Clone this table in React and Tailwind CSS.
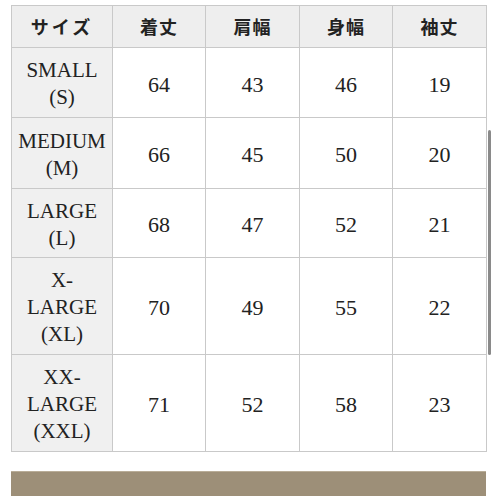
const rows = [
  { size: ["SMALL", "(S)"], h: "h-[70px]", v: [64, 43, 46, 19] },
  { size: ["MEDIUM", "(M)"], h: "h-[71px]", v: [66, 45, 50, 20] },
  { size: ["LARGE", "(L)"], h: "h-[69px]", v: [68, 47, 52, 21] },
  { size: ["X-", "LARGE", "(XL)"], h: "h-[97px]", v: [70, 49, 55, 22] },
  { size: ["XX-", "LARGE", "(XXL)"], h: "h-[97px]", v: [71, 52, 58, 23] },
];

const heads = ["着丈", "肩幅", "身幅", "袖丈"];

export default function App() {
  return (
    <div className="relative h-[496px] w-[496px] overflow-hidden bg-white pt-[5px] pl-[11px]">
      <table
        className="w-[475px] table-fixed border-collapse text-[#222222]"
        style={{ fontFamily: '"Liberation Serif", "Noto Sans CJK JP", serif' }}
      >
        <colgroup>
          <col className="w-[101px]" />
          <col className="w-[93px]" />
          <col className="w-[94px]" />
          <col className="w-[93px]" />
          <col className="w-[94px]" />
        </colgroup>
        <thead>
          <tr className="h-[42px] bg-[#eeeeee]">
            <th
              className="border border-[#c9c9c9] text-[18px] font-bold tracking-[3px]"
              style={{ fontFamily: '"Noto Sans CJK JP", sans-serif' }}
            >
              サイズ
            </th>
            {heads.map((t) => (
              <th
                key={t}
                className="border border-[#c9c9c9] text-[18px] font-bold tracking-[1px]"
                style={{ fontFamily: '"Noto Sans CJK JP", sans-serif' }}
              >
                {t}
              </th>
            ))}
          </tr>
        </thead>
        <tbody>
          {rows.map((r) => (
            <tr key={r.size.join("")} className={r.h}>
              <td className="border border-[#c9c9c9] bg-[#f0f0f0] pt-[3px] text-center text-[21px] leading-[27px]">
                {r.size.map((s) => (
                  <div key={s}>{s}</div>
                ))}
              </td>
              {r.v.map((n, i) => (
                <td key={i} className="border border-[#c9c9c9] pt-[3px] text-center text-[22px]">
                  {n}
                </td>
              ))}
            </tr>
          ))}
        </tbody>
      </table>

      <div className="mt-[19px] h-[30px] w-[475px] border-t border-[#b9ad98] bg-[#9d8f78]" />

      {/* scrollbar thumb */}
      <div className="absolute top-[130px] left-[488px] h-[225px] w-[3px] rounded-full bg-[#8a8a8a]" />
    </div>
  );
}
